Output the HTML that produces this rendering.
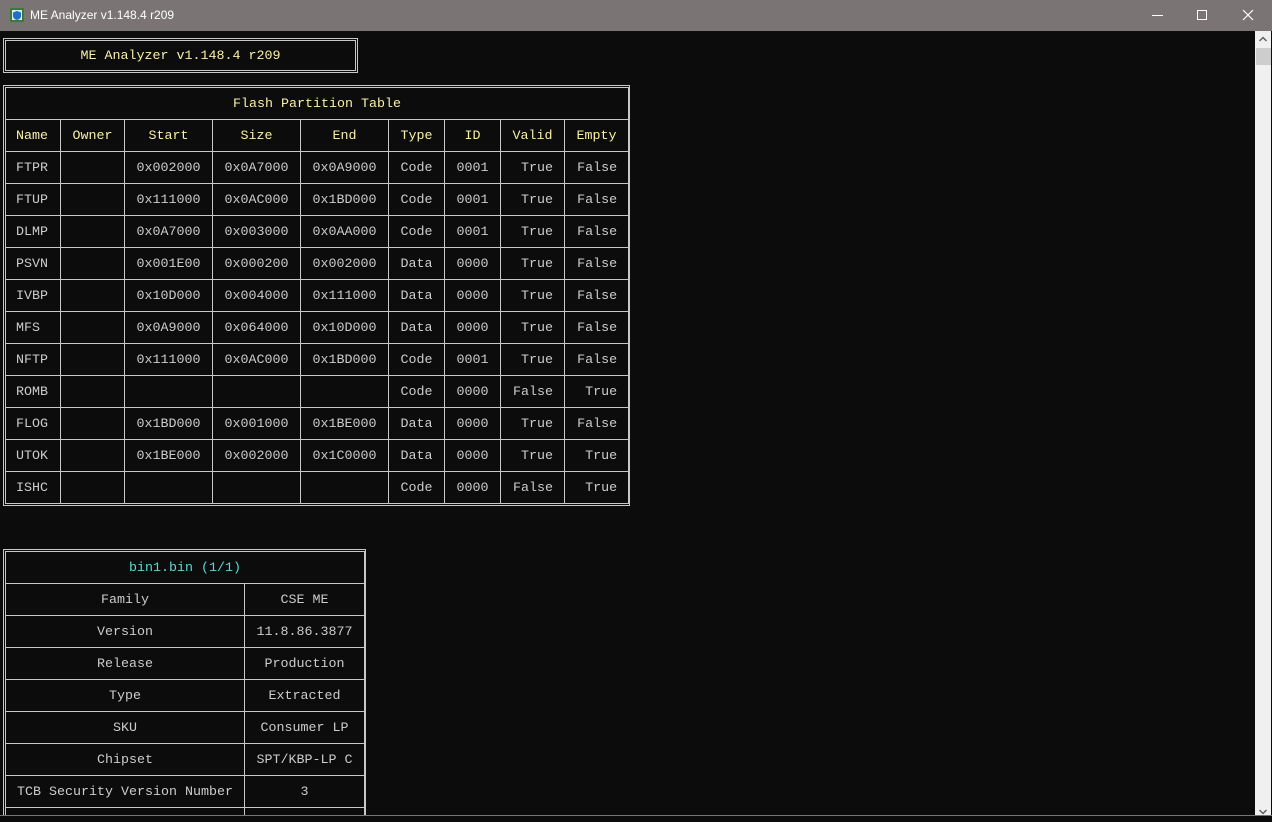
<!DOCTYPE html>
<html><head><meta charset="utf-8">
<style>
*{margin:0;padding:0;box-sizing:border-box}
body{width:1272px;height:822px;background:#0c0c0c;overflow:hidden;position:relative;font-family:"Liberation Mono",monospace;font-size:13.33px;color:#cccccc}
#tb{position:absolute;left:0;top:0;width:1272px;height:31px;background:#7a7574;color:#fff;font-family:"Liberation Sans",sans-serif;font-size:12px}
#tb .t{position:absolute;left:30px;top:8px}
#sb{position:absolute;left:1255px;top:31px;width:16px;height:791px;background:#f0f0f0}
#sb .th{position:absolute;left:1px;top:17px;width:15px;height:17px;background:#cdcdcd}
.box{position:absolute;border:1px solid #c8c8c8;padding:1px}
.inner{border:1px solid #c8c8c8}
table{border-collapse:collapse;table-layout:fixed}
td{border:1px solid #c8c8c8;height:32px;text-align:center;white-space:pre;overflow:hidden;padding:2px 0 0 0}
.y{color:#f9f1a5}.c{color:#61d6d6}
td.l{text-align:left;padding-left:10px}td.r{text-align:right;padding-right:11px}
</style></head><body>
<div id="tb">
<svg style="position:absolute;left:9px;top:7px" width="16" height="16"><rect x="1" y="1" width="14" height="14" fill="#3c7a3c"/><rect x="3" y="3" width="10" height="10" fill="#dfe8ef"/><path d="M8 4 L12 5.5 V9 C12 11 10 12.5 8 13 C6 12.5 4 11 4 9 V5.5Z" fill="#1f6fc9"/></svg>
<div class="t">ME Analyzer v1.148.4 r209</div>
<div style="position:absolute;left:1152px;top:15px;width:11px;height:1px;background:#fff"></div>
<div style="position:absolute;left:1197px;top:10px;width:10px;height:10px;border:1px solid #fff"></div>
<svg style="position:absolute;left:1242px;top:9px" width="12" height="12"><path d="M1 1L11 11M11 1L1 11" stroke="#fff" stroke-width="1.2"/></svg>
</div>
<div id="sb"><svg style="position:absolute;left:4px;top:5px" width="8" height="6"><path d="M0.5 5L4 1.5L7.5 5" stroke="#606060" stroke-width="1.5" fill="none"/></svg><div class="th"></div>
<svg style="position:absolute;left:4px;top:778px" width="8" height="6"><path d="M0.5 1L4 4.5L7.5 1" stroke="#606060" stroke-width="1.5" fill="none"/></svg></div>

<div class="box" style="left:3px;top:38px;width:355px;height:35px"><div class="inner y" style="height:31px;text-align:center;line-height:31px">ME Analyzer v1.148.4 r209</div></div>

<div class="box" style="left:3px;top:85px;width:627px;height:421px">
<table style="width:623px">
<colgroup><col style="width:55px"><col style="width:64px"><col style="width:88px"><col style="width:88px"><col style="width:88px"><col style="width:56px"><col style="width:56px"><col style="width:64px"><col style="width:64px"></colgroup>
<tr><td colspan="9" class="y" style="height:32px">Flash Partition Table</td></tr>
<tr class="y"><td class="l">Name</td><td>Owner</td><td>Start</td><td>Size</td><td>End</td><td>Type</td><td>ID</td><td>Valid</td><td>Empty</td></tr>
<tr><td class="l">FTPR</td><td></td><td>0x002000</td><td>0x0A7000</td><td>0x0A9000</td><td>Code</td><td>0001</td><td class="r">True</td><td class="r">False</td></tr>
<tr><td class="l">FTUP</td><td></td><td>0x111000</td><td>0x0AC000</td><td>0x1BD000</td><td>Code</td><td>0001</td><td class="r">True</td><td class="r">False</td></tr>
<tr><td class="l">DLMP</td><td></td><td>0x0A7000</td><td>0x003000</td><td>0x0AA000</td><td>Code</td><td>0001</td><td class="r">True</td><td class="r">False</td></tr>
<tr><td class="l">PSVN</td><td></td><td>0x001E00</td><td>0x000200</td><td>0x002000</td><td>Data</td><td>0000</td><td class="r">True</td><td class="r">False</td></tr>
<tr><td class="l">IVBP</td><td></td><td>0x10D000</td><td>0x004000</td><td>0x111000</td><td>Data</td><td>0000</td><td class="r">True</td><td class="r">False</td></tr>
<tr><td class="l">MFS</td><td></td><td>0x0A9000</td><td>0x064000</td><td>0x10D000</td><td>Data</td><td>0000</td><td class="r">True</td><td class="r">False</td></tr>
<tr><td class="l">NFTP</td><td></td><td>0x111000</td><td>0x0AC000</td><td>0x1BD000</td><td>Code</td><td>0001</td><td class="r">True</td><td class="r">False</td></tr>
<tr><td class="l">ROMB</td><td></td><td></td><td></td><td></td><td>Code</td><td>0000</td><td class="r">False</td><td class="r">True</td></tr>
<tr><td class="l">FLOG</td><td></td><td>0x1BD000</td><td>0x001000</td><td>0x1BE000</td><td>Data</td><td>0000</td><td class="r">True</td><td class="r">False</td></tr>
<tr><td class="l">UTOK</td><td></td><td>0x1BE000</td><td>0x002000</td><td>0x1C0000</td><td>Data</td><td>0000</td><td class="r">True</td><td class="r">True</td></tr>
<tr><td class="l">ISHC</td><td></td><td></td><td></td><td></td><td>Code</td><td>0000</td><td class="r">False</td><td class="r">True</td></tr>
</table></div>

<div style="position:absolute;left:0;top:549px;width:370px;height:266px;overflow:hidden">
<div class="box" style="left:3px;top:0;width:363px;height:300px">
<table style="width:359px">
<colgroup><col style="width:239px"><col style="width:120px"></colgroup>
<tr><td colspan="2" class="c">bin1.bin (1/1)</td></tr>
<tr><td>Family</td><td>CSE ME</td></tr>
<tr><td>Version</td><td>11.8.86.3877</td></tr>
<tr><td>Release</td><td>Production</td></tr>
<tr><td>Type</td><td>Extracted</td></tr>
<tr><td>SKU</td><td>Consumer LP</td></tr>
<tr><td>Chipset</td><td>SPT/KBP-LP C</td></tr>
<tr><td>TCB Security Version Number</td><td>3</td></tr>
<tr><td></td><td></td></tr>
</table></div></div>
<div style="position:absolute;left:0;top:815px;width:1272px;height:7px;background:#0c0c0c;border-top:1px solid #7a7574"></div>
</body></html>
